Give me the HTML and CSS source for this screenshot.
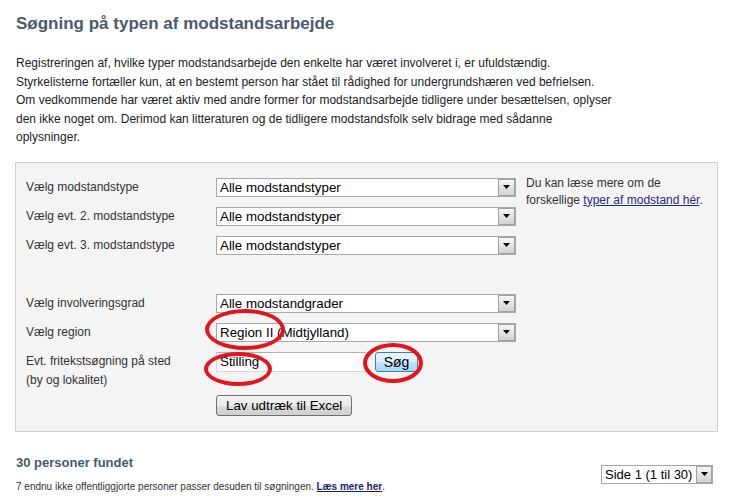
FILE: index.html
```html
<!DOCTYPE html>
<html lang="da">
<head>
    <meta charset="UTF-8">
    <title>Søgning på typen af modstandsarbejde</title>
    <link rel="stylesheet" href="styles.css">
</head>
<body>
    <div class="page">
        <h1>Søgning på typen af modstandsarbejde</h1>
        <p class="intro">Registreringen af, hvilke typer modstandsarbejde den enkelte har været involveret i, er ufuldstændig.<br>
            Styrkelisterne fortæller kun, at en bestemt person har stået til rådighed for undergrundshæren ved befrielsen.<br>
            Om vedkommende har været aktiv med andre former for modstandsarbejde tidligere under besættelsen, oplyser den ikke noget om. Derimod kan litteraturen og de tidligere modstandsfolk selv bidrage med sådanne oplysninger.</p>

        <div class="search-box">
            <div class="fields">
                <div class="row">
                    <label>Vælg modstandstype</label>
                    <div class="select"><span>Alle modstandstyper</span><span class="arrow"><svg width="7" height="4" viewBox="0 0 7 4"><path d="M0 0h7L3.5 4z"/></svg></span></div>
                </div>
                <div class="row">
                    <label>Vælg evt. 2. modstandstype</label>
                    <div class="select"><span>Alle modstandstyper</span><span class="arrow"><svg width="7" height="4" viewBox="0 0 7 4"><path d="M0 0h7L3.5 4z"/></svg></span></div>
                </div>
                <div class="row">
                    <label>Vælg evt. 3. modstandstype</label>
                    <div class="select"><span>Alle modstandstyper</span><span class="arrow"><svg width="7" height="4" viewBox="0 0 7 4"><path d="M0 0h7L3.5 4z"/></svg></span></div>
                </div>
                <div class="row"></div>
                <div class="row">
                    <label>Vælg involveringsgrad</label>
                    <div class="select"><span>Alle modstandgrader</span><span class="arrow"><svg width="7" height="4" viewBox="0 0 7 4"><path d="M0 0h7L3.5 4z"/></svg></span></div>
                </div>
                <div class="row">
                    <label>Vælg region</label>
                    <div class="select"><span>Region II (Midtjylland)</span><span class="arrow"><svg width="7" height="4" viewBox="0 0 7 4"><path d="M0 0h7L3.5 4z"/></svg></span></div>
                </div>
                <div class="row row-text">
                    <label>Evt. fritekstsøgning på sted<br>(by og lokalitet)</label>
                    <input class="text-input" type="text" value="Stilling">
                    <button class="btn btn-search" type="button">Søg</button>
                </div>
                <div class="row-excel">
                    <button class="btn" type="button">Lav udtræk til Excel</button>
                </div>
            </div>
            <div class="note">
                Du kan læse mere om de<br>forskellige <a href="#">typer af modstand hér</a>.
            </div>

            <span class="mark mark-region"></span>
            <span class="mark mark-text"></span>
            <span class="mark mark-search"></span>
        </div>

        <div class="results">
            <div>
                <h2>30 personer fundet</h2>
                <p class="extra">7 endnu ikke offentliggjorte personer passer desuden til søgningen. <a href="#">Læs mere her</a>.</p>
            </div>
            <div class="select select-page"><span>Side 1 (1 til 30)</span><span class="arrow"><svg width="7" height="4" viewBox="0 0 7 4"><path d="M0 0h7L3.5 4z"/></svg></span></div>
        </div>
    </div>
</body>
</html>
```

FILE: styles.css
```css
body {
    margin: 0;
    font-family: "Liberation Sans", Arial, sans-serif;
    color: #222;
    background: #fff;
}
.page {
    padding: 0 16px;
    width: 702px;
}
h1 {
    margin: 14px 0 0;
    font-size: 17px;
    line-height: 20px;
    color: #4a5b70;
}
.intro {
    margin: 20px 0 0;
    max-width: 600px;
    font-size: 12px;
    line-height: 18.5px;
}
.search-box {
    position: relative;
    display: flex;
    margin: 15px 0 0 -1px;
    padding: 12px 10px 15px;
    background: #f4f4f4;
    border: 1px solid #cfcfcf;
}
.fields {
    width: 490px;
    padding-top: 3px;
}
.row {
    display: flex;
    align-items: center;
    height: 19px;
    margin-bottom: 10px;
}
.row label {
    width: 190px;
    flex-shrink: 0;
    font-size: 12px;
    line-height: 19px;
    color: #333;
}
.row-text {
    align-items: flex-start;
    height: 38px;
    margin-bottom: 5px;
}
.row-excel {
    padding-left: 190px;
}
.select {
    display: flex;
    align-items: center;
    width: 300px;
    height: 19px;
    box-sizing: border-box;
    padding-left: 3px;
    background: #fff;
    border: 1px solid #a9a9a9;
    font-size: 13.33px;
    color: #000;
    white-space: nowrap;
}
.arrow {
    display: flex;
    align-items: center;
    justify-content: center;
    flex-shrink: 0;
    margin-left: auto;
    width: 15px;
    height: 15px;
    border: 1px solid #a0a0a0;
    background: linear-gradient(#f6f6f6, #d2d2d2);
}
.text-input {
    width: 150px;
    height: 20px;
    box-sizing: border-box;
    margin: 0;
    padding: 0 3px;
    border: 1px solid #d8d8d8;
    border-top-color: #b0b0b0;
    font-family: inherit;
    font-size: 13.33px;
    color: #000;
}
.btn {
    height: 21px;
    margin: 0;
    padding: 0 9px;
    border: 1px solid #707070;
    border-radius: 3px;
    background: linear-gradient(#f3f3f3 0%, #ebebeb 50%, #dddddd 51%, #cfcfcf 100%);
    font-family: inherit;
    font-size: 13.33px;
    color: #000;
}
.btn-search {
    width: 43px;
    height: 20px;
    margin-left: 9px;
    padding: 0;
    border-color: #3c7fb1;
    background: linear-gradient(#eaf6fd 0%, #d9f0fc 50%, #bee6fd 51%, #a7d9f5 100%);
    font-size: 14px;
}
.note {
    width: 180px;
    margin-left: 10px;
    font-size: 12px;
    line-height: 17px;
    color: #333;
    white-space: nowrap;
}
.note a {
    color: #2a2a8c;
}
.mark {
    position: absolute;
    border: 4px solid #e3141c;
    border-radius: 50%;
}
.mark-region {
    left: 189px;
    top: 146px;
    width: 72px;
    height: 33px;
}
.mark-text {
    left: 188px;
    top: 189px;
    width: 60px;
    height: 26px;
}
.mark-search {
    left: 347px;
    top: 180px;
    width: 52px;
    height: 32px;
}
.results {
    display: flex;
    align-items: center;
    justify-content: space-between;
    margin-top: 23px;
    padding-right: 5px;
}
h2 {
    margin: 0;
    font-size: 13px;
    line-height: 16px;
    color: #4d5868;
}
.extra {
    margin: 9px 0 0;
    font-size: 10px;
    line-height: 14px;
    color: #333;
}
.extra a {
    font-weight: bold;
    color: #1c2470;
}
.select-page {
    width: 112px;
    height: 19px;
    font-size: 13px;
}
.select-page .arrow {
    width: 14px;
    height: 15px;
}
```
